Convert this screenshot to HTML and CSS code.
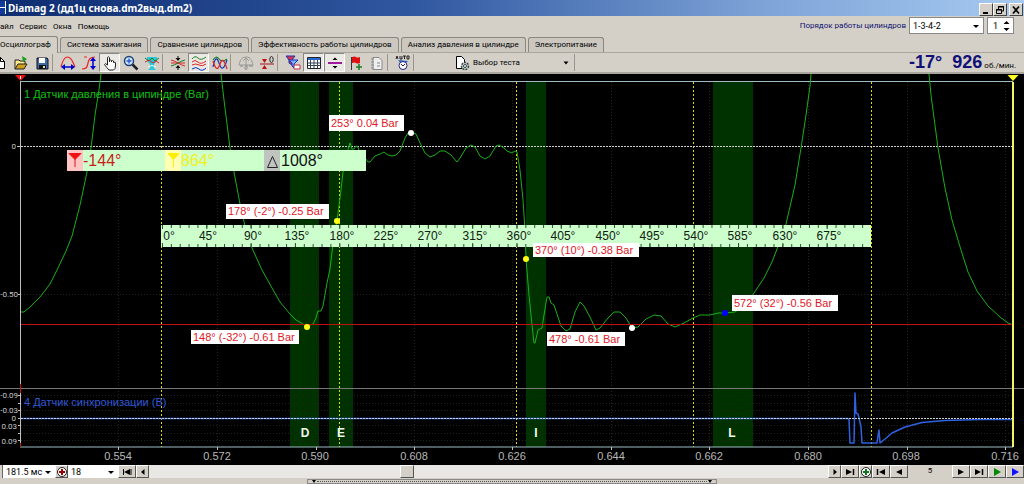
FILE: index.html
```html
<!DOCTYPE html>
<html lang="ru">
<head>
<meta charset="utf-8">
<title>Diamag 2</title>
<link rel="stylesheet" href="styles.css">
</head>
<body>
<div class="app">
  <header class="titlebar">
    <svg class="app-icon" viewBox="0 0 6 16"><path d="M0 1h5v13H0z" fill="#123a9c"/><path d="M5.500 1v13M0 7.500h5" stroke="#fff"/></svg>
    <h1 class="title">Diamag 2 (дд1ц снова.dm2выд.dm2)</h1>
    <div class="window-buttons">
      <button class="win" aria-label="Свернуть"><svg viewBox="0 0 12 10"><path d="M3 8h5" stroke="#000" stroke-width="2"/></svg></button>
      <button class="win" aria-label="Восстановить"><svg viewBox="0 0 12 10"><path d="M4.500 4V1.500h5V6H8M2.500 4.500h5v4h-5zM4 2h6M2 5h6" fill="none" stroke="#000"/></svg></button>
      <button class="win close" aria-label="Закрыть"><svg viewBox="0 0 12 10"><path d="M3 1.500l6 7M9 1.500l-6 7" stroke="#000" stroke-width="1.700"/></svg></button>
    </div>
  </header>

  <div class="menu-row">
    <nav class="menu">
      <button>айл</button><button>Сервис</button><button>Окна</button><button>Помощь</button>
    </nav>
    <div class="order">
      <label for="order">Порядок работы цилиндров</label>
      <span class="select order-select"><select id="order"><option>1-3-4-2</option></select></span>
      <span class="spin"><input aria-label="Цилиндр" value="1"><svg viewBox="0 0 7 12"><path d="M0.500 4L3.500 1l3 3zM0.500 8l3 3 3-3z"/></svg></span>
    </div>
  </div>

  <div class="tabs" role="tablist">
    <button class="tab active" role="tab">Осциллограф</button>
    <button class="tab" role="tab">Система зажигания</button>
    <button class="tab" role="tab">Сравнение цилиндров</button>
    <button class="tab" role="tab">Эффективность работы цилиндров</button>
    <button class="tab" role="tab">Анализ давления в цилиндре</button>
    <button class="tab" role="tab">Электропитание</button>
  </div>

  <div class="toolbar">
    <button class="tool" aria-label="Новый"><svg viewBox="0 0 16 16"><path d="M3.500 2.500h6l4 4v7h-10z" fill="#fff" stroke="#000"/><path d="M9.500 2.500v4h4" fill="none" stroke="#000"/></svg></button>
    <button class="tool" aria-label="Открыть"><svg viewBox="0 0 16 16"><path d="M2 14V5h4l1 1h5v3" fill="#ffe98a" stroke="#222"/><path d="M2 14l3-5h9l-3 5z" fill="#d0a020" stroke="#222"/><path d="M9 1l5 3-4 3z" fill="#18a018"/></svg></button>
    <button class="tool" aria-label="Сохранить"><svg viewBox="0 0 16 16"><path d="M3 3h10l1 1v10H3z" fill="#3f6ca8" stroke="#111"/><path d="M5 3h6v5H5z" fill="#fff"/><path d="M5 10h7v4H5z" fill="#111"/><path d="M9 11h2v2H9z" fill="#ddd"/></svg></button>
    <i class="sep"></i>
    <button class="tool" aria-label="Ширина"><svg viewBox="0 0 16 16"><path d="M1 12C2 9 3 2 7.500 2S13 8 15 12" fill="none" stroke="#e22" stroke-width="1.200"/><path d="M3 12h10" stroke="#00c" stroke-width="1.500"/><path d="M1 12l4-3v6zM15 12l-4-3v6z" fill="#00c"/></svg></button>
    <button class="tool" aria-label="Высота"><svg viewBox="0 0 16 16"><path d="M1 14c5 0 5-2 6-6s2-6 7-6M3 2h3" fill="none" stroke="#e22" stroke-width="1.200"/><path d="M12 5v7" stroke="#00c" stroke-width="1.500"/><path d="M12 2l3 4H9zM12 15l3-4H9z" fill="#00c"/></svg></button>
    <button class="tool pressed" aria-label="Рука"><svg viewBox="0 0 16 16"><path d="M5.500 10V2.500q1-1.500 2 0V7V5.500q1-1 2 0V7V6q1-1 2 0v1.500q2-1 2 .5V11q0 3-2 4H7q-2-2-4.500-5.500Q3 7.500 5.500 10z" fill="#fff" stroke="#222"/></svg></button>
    <button class="tool" aria-label="Масштаб"><svg viewBox="0 0 16 16"><circle cx="6" cy="6" r="4.500" fill="#cfe4ff" stroke="#1b3c78" stroke-width="1.400"/><path d="M3.500 6h5M6 3.500v5" stroke="#2255cc" stroke-width="1.300"/><path d="M9.500 9.500l5 5" stroke="#222" stroke-width="2.500"/></svg></button>
    <button class="tool" aria-label="Фильтр"><svg viewBox="0 0 16 16"><path d="M3 2h10v4l-3 3v4l2 2H4l2-2V9L3 6z" fill="#28c8d8"/><path d="M1 3l4 3 3-3 3 3 4-3" fill="none" stroke="#157c25"/><path d="M1 7l4-2 4 3 3-2 3 2" fill="none" stroke="#d22"/><path d="M4 12q4-3 8 0" stroke="#eff" fill="none"/></svg></button>
    <i class="sep"></i>
    <button class="tool" aria-label="Совместить"><svg viewBox="0 0 16 16"><path d="M8 1v4M8 15v-4" stroke="#111"/><path d="M5.500 3h5L8 6zM5.500 13h5L8 10z" fill="#111"/><path d="M1 5q4 1 7 3t7 3M1 8h14" fill="none" stroke="#d22"/><path d="M1 11q4-1 7-3t7-3" fill="none" stroke="#178028"/></svg></button>
    <button class="tool pressed" aria-label="Раздельно"><svg viewBox="0 0 16 16"><path d="M1 4q3-4 6-1t8-1" fill="none" stroke="#178028"/><path d="M1 7q3-3 6 0t8-1M1 10q4-2 7 0t7-1" fill="none" stroke="#d22"/><path d="M1 14q4-3 7 0t7-1" fill="none" stroke="#13b"/></svg></button>
    <button class="tool" aria-label="Вместе"><svg viewBox="0 0 16 16"><path d="M1 5q3-5 6-1t8 0" fill="none" stroke="#178028" stroke-width="1.200"/><path d="M1 12C3 2 5 2 7 8s4 9 8-3" fill="none" stroke="#13b" stroke-width="1.200"/><path d="M1 6c3 10 5 9 7 3s4-5 7 5" fill="none" stroke="#d22" stroke-width="1.200"/></svg></button>
    <i class="sep"></i>
    <button class="tool" aria-label="Авто"><svg viewBox="0 0 16 16"><path d="M1 10C2 6 3 2 8 2s6 4 7 8zM8 2v12M5 6l3-3 3 3M6 12l2 3 2-3" fill="none" stroke="#999"/><path d="M2 11h3M7 11h3M11 11h4" stroke="#888"/></svg></button>
    <button class="tool" aria-label="Ноль"><svg viewBox="0 0 16 16"><path d="M1 9h14" stroke="#a11"/><path d="M3 4h5l-2.500 4zM3 14h5l-2.500-4z" fill="#b11"/><ellipse cx="12.500" cy="4.500" rx="1.700" ry="3" fill="none" stroke="#222"/></svg></button>
    <i class="sep"></i>
    <button class="tool" aria-label="Фильтры"><svg viewBox="0 0 16 16"><path d="M1 1h9L7 5v5L4 8V5z" fill="#e23344" stroke="#13b"/><path d="M4 5h9l-4 4v4L7 11V8z" fill="#7fb0ff" stroke="#13b"/><path d="M9 10h6v4H9z" fill="#fff" stroke="#b34"/></svg></button>
    <button class="tool pressed" aria-label="Таблица"><svg viewBox="0 0 16 16"><path d="M1.500 2.500h13v11h-13z" fill="#fff" stroke="#223"/><path d="M2 3h12v2H2z" fill="#2868c8"/><path d="M4.500 5v8M8 5v8M11.500 5v8M2 8h12M2 10.500h12" stroke="#345"/></svg></button>
    <button class="tool pressed" aria-label="Линия"><svg viewBox="0 0 16 16"><path d="M1 8h14" stroke="#a018a0" stroke-width="2"/><path d="M5.500 5h5L8 2.500zM5.500 11h5L8 13.500z"/></svg></button>
    <button class="tool" aria-label="Флаг"><svg viewBox="0 0 16 16"><path d="M3.500 2v13" stroke="#333"/><path d="M4 2q3-1 4 0t4 0v6q-3 1-4 0T4 8z" fill="#d11"/><path d="M8 12h6M11 9v6" stroke="#178028" stroke-width="1.600"/></svg></button>
    <button class="tool" aria-label="Отчёт"><svg viewBox="0 0 16 16"><path d="M4 2.500h6l3 3v9H4z" fill="#eee" stroke="#888"/><path d="M2 4h3M2 7h3M2 10h3M2 13h3M8 8h3M8 11h3" stroke="#888"/></svg></button>
    <i class="sep"></i>
    <button class="tool" aria-label="AUTO"><svg viewBox="0 0 16 16"><path d="M1 4l1-3 1 3M5 1v3h2V1M8 1h3M9.500 1v3M12 1h2v3h-2z" fill="none" stroke="#222"/><path d="M3 5l10 1-3 3H6z" fill="#2868c8"/><circle cx="8" cy="10.500" r="4" fill="#fff" stroke="#228"/><path d="M6 9l2 2 2-2" stroke="#223" fill="none"/></svg></button>
    <i class="sep"></i>
    <button class="test">
      <svg class="test-icon" viewBox="0 0 16 16"><path d="M2.500 1.500h5l3 3v9h-8z" fill="#fff" stroke="#000"/><circle cx="11" cy="11" r="3.500" fill="#c8d4d0" stroke="#344" stroke-width="1.500" stroke-dasharray="2 1"/><circle cx="11" cy="11" r="1.500" fill="#fff" stroke="#344"/></svg>
      <span>Выбор теста</span>
      <svg class="down" viewBox="0 0 6 4"><path d="M0.500 0.500h5L3 3.500z"/></svg>
    </button>
    <i class="sep"></i>
    <output class="rpm"><b>-17°</b><b>926</b><span>об./мин.</span></output>
  </div>

  <main class="scope">
    <svg class="chart" viewBox="0 74 1024 391" role="img" aria-label="Осциллограмма">
      <rect class="bg" y="74" width="1024" height="391"/>
      <path class="band" d="M290 82h29v365h-29zM329 82h24v365h-24zM526 82h20v365h-20zM713 82h40v365h-40z"/>
      <path class="grid" d="M118.500 82v365M217.500 82v365M316.500 82v365M414.500 82v365M512.500 82v365M611.500 82v365M709.500 82v365M808.500 82v365M907.500 82v365M1005.500 82v365M21 294.500h992M21 395.500h992M21 403.500h992M21 410.500h992M21 425.500h992M21 433.500h992M21 440.500h992"/>
      <path class="angle" d="M161.500 82v365M339.500 82v365M516.500 82v365M693.500 82v365M871.500 82v365"/>
      <path class="frame" d="M20 81.500h993M20 447h993"/>
      <path class="split" d="M0 388.500h1024"/>
      <path class="axis" d="M20.500 82v365M17 146.500h4M18 294.500h3M18 395.500h3M18 403.500h3M18 410.500h3M18 418.500h3M18 425.500h3M18 433.500h3M18 440.500h3M118.500 447v3M217.500 447v3M316.500 447v3M414.500 447v3M512.500 447v3M611.500 447v3M709.500 447v3M808.500 447v3M907.500 447v3M1005.500 447v3"/>
      <path class="red" d="M20.500 384v9M20.500 443v4"/>

      <path class="sync" d="M21 418.500H848L849 420 850 443H854L854.500 418 855 393 856 413 858 414 859 418 861 427 862 443H877L878 436 879 430 880 443 885 439 892 433 905 427 922 422.500 945 420.500 980 419.500H1013"/>
      <path class="zero" d="M21 146.500h992M21 418.500h992"/>
      <path class="trace" d="M21 312L24 312 30 307 40 297 50 284 58 268 66 251 72 236 80 205 87 172 91 148 95 115 99 90 101 74"/>
      <path class="trace" d="M221 74L224 100 230 148 234 172 240 204 245 226 252 248 262 270 272 288 280 302 290 314 296 320 303 324 307 326 313 324 316 318 318 311 321 311 323 306 327 283 330 269 332 252 334 235 337 221 341 190 343 172 346 157 349 146 350 143 352 149 354 149 356 146 358 147 360 154 365 158 368 162 370 162 375 156 380 154 384 152 388 155 392 156 396 155 400 151 405 138 408 133 411 132 416 134 421 145 425 153 430 157 435 155 440 151 445 151 451 155 457 162 460 158 466 148 471 145 475 147 480 156 485 159 490 156 496 146 499 145 504 148 507 151 512 153 515 151 517 152 520 170 523 200 525 230 526 259 529 295 532 325 534 343 535 343 538 330 542 328 544 315 547 297 549 297 551 303 554 305 557 314 561 326 566 331 570 329 575 312 580 302 584 306 590 317 596 330 600 328 608 318 614 312 620 312 626 318 632 328 638 327 646 319 654 315 661 316 668 324 675 327 684 323 693 318 700 315 710 315 718 313 725 313 735 312 745 305 754 293 764 278 772 262 777 249 786 224 795 185 801 148 806 115 810 86 811 74"/>
      <path class="trace" d="M929 74L931 95 938 148 945 188 952 220 961 250 968 272 977 291 988 306 1000 317 1008 323 1013 325"/>
      <path class="level" d="M21 324.500h992"/>

      <path class="cursor" d="M1013 82v365"/>
      <path d="M1007.500 75h11l-5.500 6z" fill="#ff2"/>
      <path d="M15 75h11l-5.500 6z" fill="#e11"/><path d="M20.500 76v3" stroke="#fff"/>

      <text class="name pressure" x="24" y="98">1 Датчик давления в ципиндре (Bar)</text>
      <text class="name blue" x="24" y="406">4 Датчик синхронизации (B)</text>
      <g class="scale">
        <text x="16" y="149">0</text><text x="18" y="297">-0.50</text>
        <text x="18" y="398">-0.09</text><text x="18" y="413">-0.03</text><text x="16" y="421">0</text><text x="17" y="429">0.03</text><text x="17" y="444">0.09</text>
      </g>
      <g class="time">
        <text x="118" y="460">0.554</text><text x="217" y="460">0.572</text><text x="315" y="460">0.590</text><text x="414" y="460">0.608</text><text x="512" y="460">0.626</text><text x="611" y="460">0.644</text><text x="709" y="460">0.662</text><text x="808" y="460">0.680</text><text x="906" y="460">0.698</text><text x="1005" y="460">0.716</text>
      </g>
      <g class="zone"><text x="305" y="437">D</text><text x="341" y="437">E</text><text x="536" y="437">I</text><text x="732" y="437">L</text></g>

      <rect class="mint" x="67" y="150" width="299" height="21"/>
      <path d="M67 150h16v21H67z" fill="#ffc4c4"/><path d="M165 150h16v21h-16z" fill="#ffffb4"/><path d="M264 150h16v21h-16z" fill="#c0c4c0"/>
      <path d="M69 153.500h12l-6 6zM75 157v10" fill="#e11" stroke="#e11"/>
      <path d="M168 153.500h11l-5.500 6zM173.500 157v10" fill="#fe0" stroke="#fe0"/>
      <path d="M267.500 167.500l5-11 5 11z" fill="none" stroke="#222"/>
      <g class="readout"><text x="83" y="166" fill="#c81e1e">-144°</text><text x="181" y="166" fill="#f0f020">864°</text><text x="281" y="166" fill="#111">1008°</text></g>

      <rect class="mint" x="161" y="225" width="710" height="22"/>
      <path class="ruler-ticks" pathLength="720" stroke-width="3" stroke-dasharray="1 8" d="M162 226.500h709"/>
      <path class="ruler-ticks" pathLength="720" stroke-width="4" stroke-dasharray="1 44" d="M162 227h709"/>
      <path class="ruler-ticks" pathLength="720" stroke-width="3" stroke-dasharray="1 8" d="M162 245.500h709"/>
      <path class="ruler-ticks" pathLength="720" stroke-width="4" stroke-dasharray="1 44" d="M162 245h709"/>
      <g class="degrees">
        <text x="169" y="240">0°</text><text x="208" y="240">45°</text><text x="253" y="240">90°</text><text x="297" y="240">135°</text><text x="342" y="240">180°</text><text x="386" y="240">225°</text><text x="430" y="240">270°</text><text x="475" y="240">315°</text><text x="519" y="240">360°</text><text x="563" y="240">405°</text><text x="608" y="240">450°</text><text x="652" y="240">495°</text><text x="696" y="240">540°</text><text x="740" y="240">585°</text><text x="785" y="240">630°</text><text x="829" y="240">675°</text>
      </g>

      <path d="M329 115h75v16h-75zM226 204h103v15H226zM191 330h108v14H191zM533 243h106v14H533zM547 332h78v14h-78zM732 295h106v16H732z" fill="#fff"/>
      <g class="callout">
        <text x="331" y="127">253° 0.04 Bar</text><text x="228" y="215">178° (-2°) -0.25 Bar</text><text x="193" y="341">148° (-32°) -0.61 Bar</text><text x="535" y="254">370° (10°) -0.38 Bar</text><text x="549" y="343">478° -0.61 Bar</text><text x="734" y="307">572° (32°) -0.56 Bar</text>
      </g>
      <g fill="#fff"><circle cx="411" cy="133" r="3"/><circle cx="632" cy="328" r="3"/></g>
      <g fill="#ff1"><circle cx="337" cy="221" r="3"/><circle cx="307" cy="327" r="3"/><circle cx="526" cy="259" r="3"/></g>
      <circle cx="725" cy="313" r="3" fill="#00f"/>
    </svg>
  </main>

  <footer class="bottom">
    <span class="edge"></span>
    <span class="select span-select"><select aria-label="Развёртка"><option>181.5 мс</option></select></span>
    <button class="step small" aria-label="Метка"><svg viewBox="0 0 12 12"><circle cx="6" cy="6" r="4.500" fill="#fff" stroke="#222"/><path d="M3 6h6M6 3v6" stroke="#900" stroke-width="2"/></svg></button>
    <span class="select count-select"><select aria-label="Количество"><option>18</option></select></span>
    <button class="step" aria-label="В начало"><svg viewBox="0 0 12 12"><path d="M9 3L3 6l6 3z"/><path d="M2.500 3v6M10 3v6" stroke="#000"/></svg></button>
    <button class="step small" aria-label="Назад"><svg viewBox="0 0 12 12"><path d="M4 6l3.500-3v6z"/></svg></button>
    <input class="scroll" type="range" min="0" max="1000" value="377" aria-label="Прокрутка">
    <button class="step small" aria-label="Вперёд"><svg viewBox="0 0 12 12"><path d="M8 6L4.500 3v6z"/></svg></button>
    <button class="step" aria-label="В конец"><svg viewBox="0 0 12 12"><path d="M2 3l6 3-6 3z"/><path d="M9.500 3v6" stroke="#000" stroke-width="1.500"/></svg></button>
    <button class="step small" aria-label="Добавить"><svg viewBox="0 0 12 12"><circle cx="6" cy="6" r="4.500" fill="#fff" stroke="#222"/><path d="M3 6h6M6 3v6" stroke="#172" stroke-width="2"/></svg></button>
    <button class="step" aria-label="Первый"><svg viewBox="0 0 12 12"><path d="M10 3L4 6l6 3z"/><path d="M2.500 3v6" stroke="#000" stroke-width="1.500"/></svg></button>
    <button class="step" aria-label="Предыдущий"><svg viewBox="0 0 12 12"><path d="M9 3L3 6l6 3z"/></svg></button>
    <output class="page">5</output>
    <button class="step" aria-label="Следующий"><svg viewBox="0 0 12 12"><path d="M3 3l6 3-6 3z"/></svg></button>
    <button class="step" aria-label="Последний"><svg viewBox="0 0 12 12"><path d="M2 3l6 3-6 3z"/><path d="M9.500 3v6" stroke="#000" stroke-width="1.500"/></svg></button>
    <button class="step" aria-label="Пуск"><svg viewBox="0 0 12 12"><path d="M3 2l7 4-7 4z" fill="#080"/></svg></button>
    <button class="step" aria-label="Воспроизвести"><svg viewBox="0 0 12 12"><path d="M3 2l7 4-7 4z" fill="#11f"/></svg></button>
  </footer>
  <div class="splitter"><div class="grip"><svg viewBox="0 0 6 4"><path d="M1 0h4L3 3z"/></svg><i></i><svg viewBox="0 0 6 4"><path d="M1 0h4L3 3z"/></svg></div></div>
</div>
</body>
</html>
```

FILE: styles.css
```css
* { box-sizing: border-box; }
body { margin: 0; background: #d4d0c8; font-family: Roboto, "Liberation Sans", sans-serif; font-size: 8px; line-height: 12px; color: #000; overflow: hidden; }
button, input, select { margin: 0; padding: 0; border: 0; background: none; font: inherit; color: inherit; }
svg { display: block; }
.app { display: flex; flex-direction: column; }

.titlebar { display: flex; align-items: center; height: 16px; background: linear-gradient(90deg, #0e2c70, #2f57a0 40%, #7fa4d8 75%, #a6caf0); }
.app-icon { width: 6px; height: 16px; }
.title { flex: 1; margin: 0 0 0 2px; color: #fff; font-family: "Noto Sans", "Open Sans", sans-serif; font-size: 10px; line-height: 16px; font-weight: 700; }
.window-buttons { display: flex; align-self: flex-end; padding-right: 1px; }
.win { display: flex; align-items: center; justify-content: center; width: 14px; height: 13px; background: #d4d0c8; border: 1px solid; border-color: #fff #444 #444 #fff; }
.win svg { width: 12px; height: 10px; }
.close { margin-left: 2px; }

.menu-row { display: flex; justify-content: space-between; align-items: flex-start; height: 20px; padding: 1px 10px 0 0; }
.menu { display: flex; gap: 6px; padding-top: 4px; }
.order { display: flex; align-items: center; gap: 3px; }
.order label { color: #101070; }
.select { position: relative; display: inline-block; background: #fff; }
.select select { width: 100%; height: 100%; padding-left: 3px; appearance: none; }
.select::after { content: ""; position: absolute; right: 4px; top: 50%; margin-top: -1px; border: 3px solid transparent; border-top-color: #000; border-bottom: 0; pointer-events: none; }
.order-select { width: 75px; height: 17px; border: 1px solid #888; }
.spin { display: flex; align-items: center; width: 27px; height: 17px; background: #fff; border: 1px solid #888; padding-left: 5px; }
.spin input { width: 10px; min-width: 0; outline: 0; }
.spin svg { width: 7px; height: 12px; }

.tabs { display: flex; gap: 2px; height: 17px; align-items: flex-end; border-bottom: 1px solid #aaa69e; }
.tab { height: 15px; padding: 0 6px; border: 1px solid #8a8780; border-bottom: 0; border-radius: 3px 3px 0 0; white-space: nowrap; background: #ccc8c0; }
.tab.active { height: 17px; padding-left: 0; border-left: 0; background: #d4d0c8; margin-bottom: -1px; border-radius: 0 3px 0 0; }

.toolbar { display: flex; align-items: center; height: 21px; padding-right: 8px; border-bottom: 2px solid #aaa69e; }
.tool { flex: none; display: flex; align-items: center; justify-content: center; width: 21px; height: 19px; }
.tool:first-child { width: 10px; justify-content: flex-end; padding-right: 3px; }
.tool svg { flex: none; width: 16px; height: 16px; }
.pressed { background: #ebe9e4; border: 1px solid; border-color: #888 #fff #fff #888; }
.sep { flex: none; width: 5px; height: 17px; border-left: 1px solid #99958c; }
.test { display: flex; align-items: center; width: 156px; height: 19px; padding: 0 5px 0 36px; gap: 3px; text-align: left; }
.test span { flex: 1; white-space: nowrap; }
.test-icon { width: 16px; height: 16px; }
.down { width: 6px; height: 4px; }
.rpm { display: flex; align-items: baseline; margin-left: auto; gap: 2px; white-space: nowrap; }
.rpm b { font-family: "Liberation Sans", sans-serif; font-size: 18px; line-height: 19px; color: #101078; }
.rpm b + b { margin-left: 8px; }

.scope { background: #000; }
.chart { width: 100%; height: auto; font-family: "Liberation Sans", Arial, sans-serif; }
.chart path { stroke-linejoin: round; }
.bg { fill: #000; }
.band { fill: #003200; }
.grid { fill: none; stroke: #24241a; stroke-dasharray: 1 2; }
.angle { fill: none; stroke: #e0dc00; stroke-dasharray: 2 2; }
.frame { fill: none; stroke: #9dbcc4; }
.split { stroke: #777; }
.axis { fill: none; stroke: #c0c0c0; }
.red, .level { stroke: #c01010; }
.zero { stroke: #d0d0d0; stroke-dasharray: 2 1; }
.sync { fill: none; stroke: #2f62e0; stroke-width: 1.5; }
.trace { fill: none; stroke: #18b018; }
.cursor { stroke: #f4f460; stroke-width: 2; }
.name { font-size: 11px; }
.pressure { fill: #10c010; }
.blue { fill: #3058d8; }
.scale { font-family: Roboto, sans-serif; font-size: 8px; fill: #c8c8c8; text-anchor: end; }
.time { font-size: 11px; fill: #b8b8b8; text-anchor: middle; }
.zone { font-size: 12px; font-weight: 700; fill: #eef8ee; text-anchor: middle; }
.mint { fill: #ccffcc; }
.readout { font-size: 16px; }
.ruler-ticks { fill: none; stroke: #345034; }
.degrees { font-size: 12px; fill: #102010; text-anchor: middle; }
.callout { font-size: 11px; fill: #e01828; }

.bottom { display: flex; height: 13px; background: #d4d0c8; }
.edge { width: 3px; border-right: 1px solid #666; }
.span-select { width: 52px; }
.count-select { width: 50px; }
.step { flex: none; display: flex; align-items: center; justify-content: center; width: 18px; height: 13px; background: #d4d0c8; border: 1px solid; border-color: #fff #555 #555 #fff; }
.step svg { flex: none; width: 12px; height: 12px; }
.small { width: 13px; }
.scroll { flex: 1; min-width: 0; height: 13px; appearance: none; background: #e9e7e3; }
.scroll::-webkit-slider-thumb { appearance: none; width: 14px; height: 13px; background: #d4d0c8; border: 1px solid; border-color: #fff #555 #555 #fff; }
.page { width: 44px; text-align: center; }
.splitter { display: flex; justify-content: center; height: 6px; padding-top: 1px; }
.grip { display: flex; align-items: center; width: 40%; height: 5px; padding: 0 3px; border: 1px solid #888; }
.grip svg { width: 6px; height: 4px; }
.grip i { flex: 1; height: 1px; border-top: 1px dotted #555; }
.menu-row, .test span, .bottom, .page { font-size: 8px; }
.bottom select, .order-select select, .spin input { font-size: 9px; }
```
